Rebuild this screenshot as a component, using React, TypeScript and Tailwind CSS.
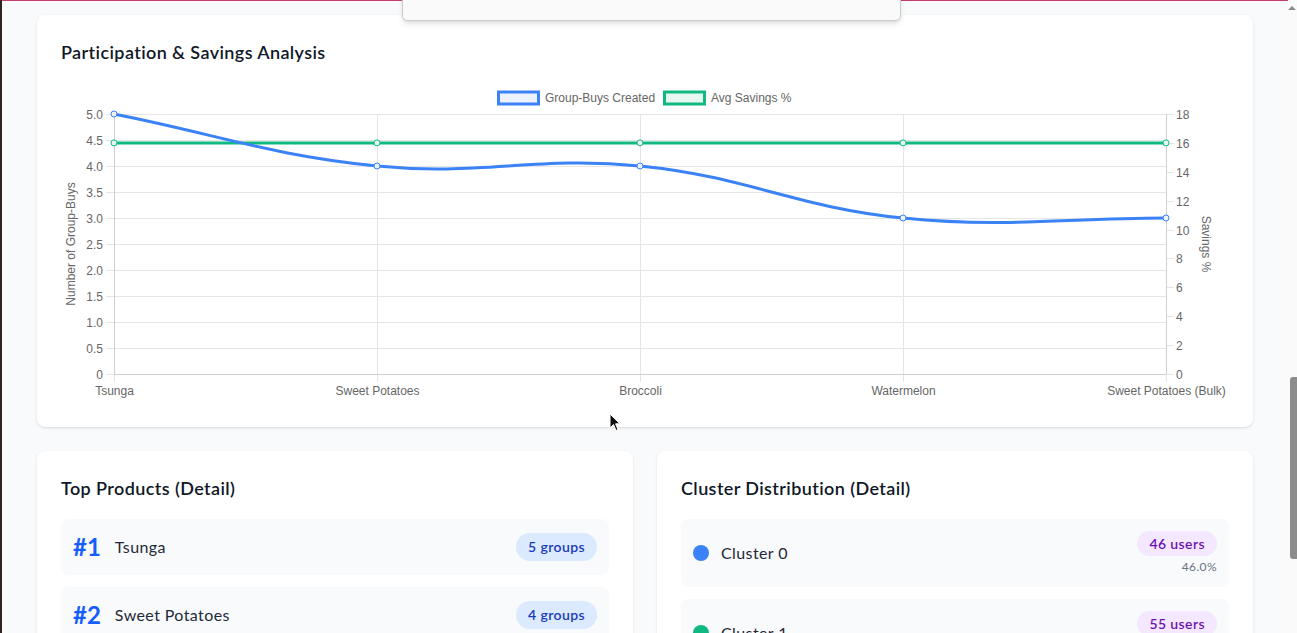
import React from "react";

const xLabels = ["Tsunga", "Sweet Potatoes", "Broccoli", "Watermelon", "Sweet Potatoes (Bulk)"];
const leftTicks = ["5.0", "4.5", "4.0", "3.5", "3.0", "2.5", "2.0", "1.5", "1.0", "0.5", "0"];
const rightTicks = ["18", "16", "14", "12", "10", "8", "6", "4", "2", "0"];

// plot box inside the svg
const L = 53;
const R = 1105;
const T = 31;
const B = 291;
const step = (R - L) / 4;
const savingsY = B - (16 / 18) * (B - T);

function Chart() {
  const font = "'Liberation Sans', Arial, sans-serif";
  return (
    <svg width="1168" height="320" viewBox="0 0 1168 320" className="block tracking-normal">
      {/* legend */}
      <rect x="437.5" y="9" width="40" height="12" fill="#ebf2fe" stroke="#3b82f6" strokeWidth="3" />
      <text x="484" y="19" fontSize="12" fill="#666" fontFamily={font}>
        Group-Buys Created
      </text>
      <rect x="603.5" y="9" width="40" height="12" fill="#e7f8f2" stroke="#10b981" strokeWidth="3" />
      <text x="650" y="19" fontSize="12" fill="#666" fontFamily={font}>
        Avg Savings %
      </text>

      {/* horizontal grid + left ticks */}
      {leftTicks.map((t, i) => {
        const y = T + i * 26 + 0.5;
        return (
          <g key={t}>
            <line x1={L - 8} x2={R} y1={y} y2={y} stroke="#e5e5e5" />
            <text x="42" y={y + 4} textAnchor="end" fontSize="12" fill="#666" fontFamily={font}>
              {t}
            </text>
          </g>
        );
      })}
      {rightTicks.map((t, i) => {
        const y = Math.round(T + (i * (B - T)) / 9) + 0.5;
        return (
          <g key={t}>
            <line x1={R} x2={R + 8} y1={y} y2={y} stroke="#e5e5e5" />
            <text x="1115" y={y + 4} fontSize="12" fill="#666" fontFamily={font}>
              {t}
            </text>
          </g>
        );
      })}

      {/* vertical grid + x labels */}
      {xLabels.map((l, i) => {
        const x = L + i * step + 0.5;
        return (
          <g key={l}>
            <line x1={x} x2={x} y1={T} y2={B + 8} stroke="#e5e5e5" />
            <text x={x} y="312" textAnchor="middle" fontSize="12" fill="#666" fontFamily={font}>
              {l}
            </text>
          </g>
        );
      })}

      {/* axis borders */}
      <line x1={L + 0.5} x2={L + 0.5} y1={T} y2={B} stroke="#cfcfcf" />
      <line x1={R + 0.5} x2={R + 0.5} y1={T} y2={B} stroke="#cfcfcf" />
      <line x1={L} x2={R} y1={B + 0.5} y2={B + 0.5} stroke="#cfcfcf" />

      {/* axis titles */}
      <text
        transform="translate(14 161) rotate(-90)"
        textAnchor="middle"
        fontSize="12"
        fill="#666"
        fontFamily={font}
      >
        Number of Group-Buys
      </text>
      <text
        transform="translate(1141 161) rotate(90)"
        textAnchor="middle"
        fontSize="12"
        fill="#666"
        fontFamily={font}
      >
        Savings %
      </text>

      {/* savings line */}
      <line x1={L} x2={R} y1={savingsY} y2={savingsY} stroke="#10b981" strokeWidth="3" />
      {xLabels.map((l, i) => (
        <circle key={"g" + l} cx={L + i * step} cy={savingsY} r="3" fill="#e7f8f2" stroke="#10b981" />
      ))}

      {/* group-buys curve */}
      <path
        d="M53,31 C158.2,51.8 209.8,72.5 316,83 C420.2,93.3 474.8,72.7 579,83 C685.2,93.5 735.8,124.5 842,135 C946.2,145.3 999.8,135 1105,135"
        fill="none"
        stroke="#3b82f6"
        strokeWidth="3"
      />
      {[31, 83, 83, 135, 135].map((y, i) => (
        <circle key={"b" + i} cx={L + i * step} cy={y} r="3" fill="#ebf2fe" stroke="#3b82f6" />
      ))}
    </svg>
  );
}

const products = [
  { rank: 1, name: "Tsunga", groups: 5 },
  { rank: 2, name: "Sweet Potatoes", groups: 4 },
];

const clusters = [
  { name: "Cluster 0", users: 46, pct: "46.0%", color: "bg-[#3b82f6]" },
  { name: "Cluster 1", users: 55, pct: "55.0%", color: "bg-[#10b981]" },
];

export default function App() {
  return (
    <div className="relative flex h-[633px] overflow-hidden bg-gray-50 font-['Lato','Noto_Sans',sans-serif] tracking-[0.025em]">
      <div className="w-[2px] shrink-0 bg-[#2d2623]" />

      <div className="flex-1 border-t border-[#c43e6c] px-[35px] pt-[14px]">
        <div className="rounded-lg bg-white px-6 pt-[23px] pb-6 shadow-sm">
          <h2 className="mb-[17px] text-lg leading-7 font-semibold text-gray-900">
            Participation &amp; Savings Analysis
          </h2>
          <Chart />
        </div>

        <div className="mt-6 grid grid-cols-2 gap-6">
          <div className="rounded-lg bg-white p-6 pt-[23px] shadow-sm">
            <h2 className="mb-[17px] text-lg leading-7 font-semibold text-gray-900">Top Products (Detail)</h2>
            <div className="flex flex-col gap-3">
              {products.map((p) => (
                <div key={p.rank} className="flex items-center justify-between rounded-lg bg-gray-50 px-3 py-3">
                  <div className="flex items-center gap-[14px]">
                    <span className="text-2xl leading-8 font-bold tracking-normal text-blue-600">#{p.rank}</span>
                    <span className="text-base text-gray-800">{p.name}</span>
                  </div>
                  <span className="rounded-full bg-blue-100 px-3 py-1 text-sm font-semibold text-blue-800">
                    {p.groups} groups
                  </span>
                </div>
              ))}
            </div>
          </div>

          <div className="rounded-lg bg-white p-6 pt-[23px] shadow-sm">
            <h2 className="mb-[17px] text-lg leading-7 font-semibold text-gray-900">
              Cluster Distribution (Detail)
            </h2>
            <div className="flex flex-col gap-3">
              {clusters.map((c) => (
                <div key={c.name} className="flex items-center justify-between rounded-lg bg-gray-50 px-3 py-3">
                  <div className="flex items-center gap-3">
                    <span className={`h-4 w-4 rounded-full ${c.color}`} />
                    <span className="text-base text-gray-800">{c.name}</span>
                  </div>
                  <div className="flex flex-col items-end gap-[3px]">
                    <span className="rounded-full bg-purple-100 px-3 py-1 text-sm leading-[17px] font-semibold text-purple-800">
                      {c.users} users
                    </span>
                    <span className="text-xs text-gray-500">{c.pct}</span>
                  </div>
                </div>
              ))}
            </div>
          </div>
        </div>
      </div>

      {/* scrollbar */}
      <div className="flex w-[9px] shrink-0 flex-col items-end bg-[#fafafa]">
        <div className="mt-[6px] mr-[1px] h-0 w-0 border-x-[4px] border-b-[4px] border-x-transparent border-b-[#8a8a8a]" />
        <div className="mt-[367px] h-[182px] w-[7px] rounded-l-[3px] bg-[#8c8c8c]" />
      </div>

      {/* floating popup at the top */}
      <div className="absolute top-[-4px] left-[402px] h-[25px] w-[499px] rounded-b-[5px] border border-[#cacaca] bg-[#fafafa] shadow-md" />

      {/* mouse cursor */}
      <svg className="absolute top-[413px] left-[609px]" width="12" height="19" viewBox="0 0 12 19">
        <path d="M1 1 L1 15 L4.5 11.5 L7 17.5 L9 16.6 L6.6 10.8 L11 10.8 Z" fill="#111" stroke="#fff" strokeWidth="1" />
      </svg>
    </div>
  );
}
